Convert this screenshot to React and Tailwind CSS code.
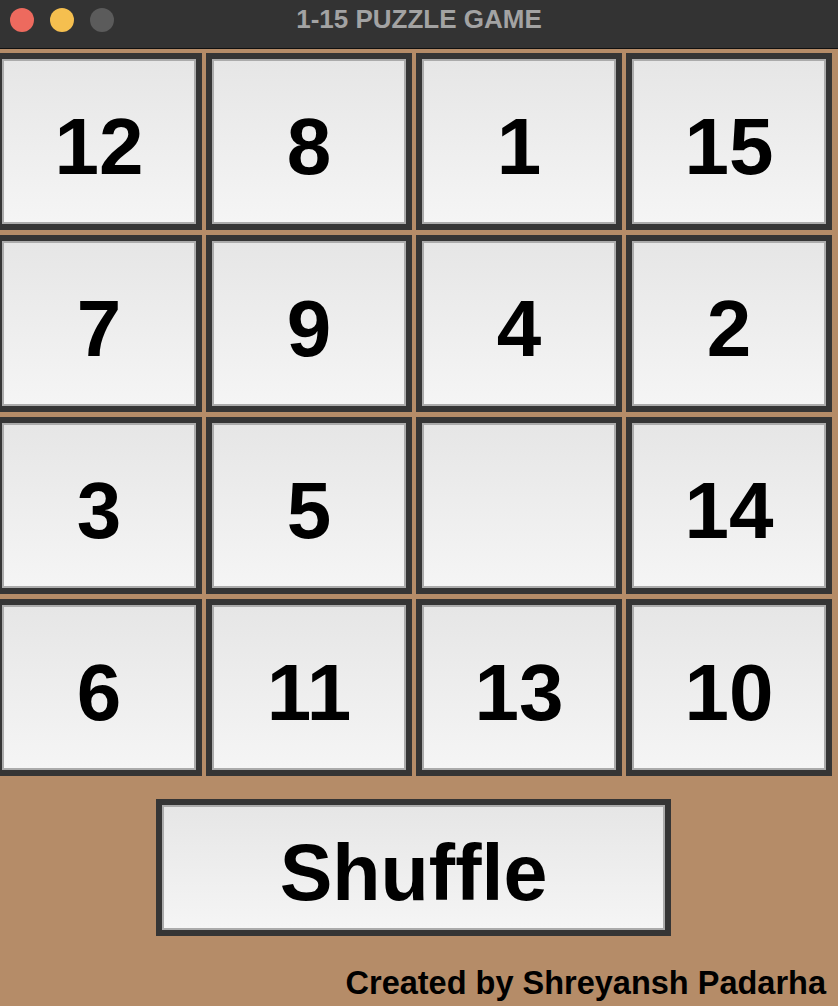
import React from "react";

const tiles = [12, 8, 1, 15, 7, 9, 4, 2, 3, 5, null, 14, 6, 11, 13, 10];

function Tile({ n }) {
  return (
    <div className="bg-[#353535] p-[6px]">
      <div className="h-full w-full border-2 border-[#ababab] bg-gradient-to-b from-[#e6e6e6] to-[#f5f5f5] flex items-center justify-center">
        <span className="text-[80px] font-bold text-black leading-none pt-[10px]" style={{ fontFamily: '"Liberation Sans", Arial, sans-serif' }}>
          {n ?? ""}
        </span>
      </div>
    </div>
  );
}

export default function App() {
  return (
    <div className="w-[838px] h-[1006px] overflow-hidden bg-[#b58c68] flex flex-col" style={{ fontFamily: '"Liberation Sans", Arial, sans-serif' }}>
      <div className="h-[49px] shrink-0 bg-[#333333] border-b border-[#111111] relative flex items-center justify-center">
        <div className="absolute left-[10px] top-[8px] flex gap-[16px]">
          <div className="w-[24px] h-[24px] rounded-full bg-[#ed6a5e]" />
          <div className="w-[24px] h-[24px] rounded-full bg-[#f5bf4f]" />
          <div className="w-[24px] h-[24px] rounded-full bg-[#5b5b5b]" />
        </div>
        <span className="text-[26px] font-bold text-[#a3a3a3] -mt-[10px]">1-15 PUZZLE GAME</span>
      </div>
      <div className="pt-[4px]">
        <div className="-ml-[4px] grid grid-cols-[repeat(4,206px)] auto-rows-[177px] gap-x-[4px] gap-y-[5px]">
          {tiles.map((n, i) => (
            <Tile key={i} n={n} />
          ))}
        </div>
      </div>
      <div className="mt-[23px] ml-[156px] w-[515px] h-[137px] bg-[#353535] p-[6px]">
        <div className="h-full w-full border-2 border-[#ababab] bg-gradient-to-b from-[#e6e6e6] to-[#f5f5f5] flex items-center justify-center">
          <span className="text-[79px] font-bold text-black leading-none pt-[10px]">Shuffle</span>
        </div>
      </div>
      <div className="flex justify-end pr-[12px] mt-[31px]">
        <span className="text-[32.5px] font-bold text-black leading-none">Created by Shreyansh Padarha</span>
      </div>
    </div>
  );
}
